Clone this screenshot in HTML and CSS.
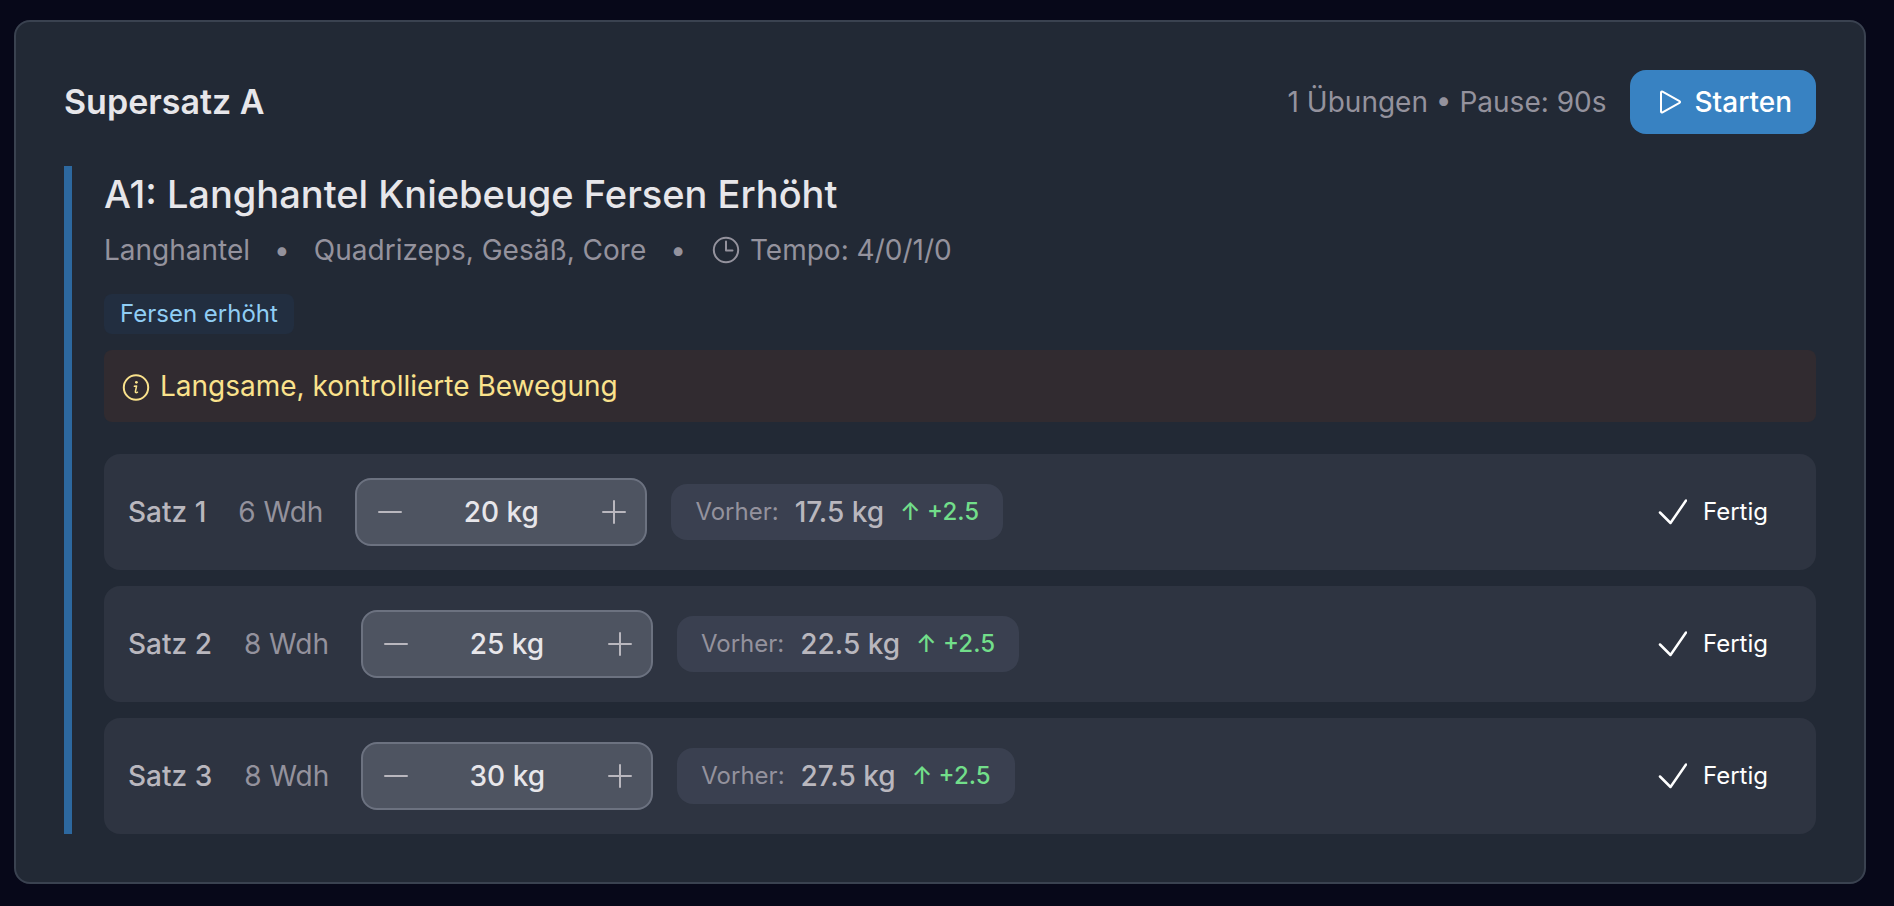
FILE: index.html
```html
<!DOCTYPE html>
<html lang="de">
<head>
<meta charset="utf-8">
<title>Supersatz A</title>
<link rel="stylesheet" href="styles.css">
</head>
<body>
<svg class="sprite" aria-hidden="true">
  <symbol id="play" viewBox="0 0 32 32"><path d="M7 6.500v19a1 1 0 0 0 1.500.9l17-9.500a1 1 0 0 0 0-1.800l-17-9.500A1 1 0 0 0 7 6.500Z"/></symbol>
  <symbol id="clock" viewBox="0 0 32 32"><circle cx="16" cy="16" r="12.200"/><path d="M16 7.500V16.500H22.500"/></symbol>
  <symbol id="info" viewBox="0 0 32 32"><circle cx="16" cy="17.500" r="12.200"/><path class="stem" d="M14.400 16.300L16.600 15.900L15.400 21.500C15.200 22.700 16.200 23.100 17.500 22.200"/><circle class="dot" cx="16.400" cy="12.300" r="1.400"/></symbol>
  <symbol id="minus" viewBox="0 0 32 32"><path d="M6 16h22"/></symbol>
  <symbol id="plus" viewBox="0 0 32 32"><path d="M6 16h22M17 5v22"/></symbol>
  <symbol id="check" viewBox="0 0 32 32"><path d="M5 16.500L15.500 27L31 4.500"/></symbol>
</svg>
<main class="card">
  <header class="card-header">
    <h2 class="card-title">Supersatz A</h2>
    <div class="card-actions">
      <span class="muted">1 Übungen • Pause: 90s</span>
      <button class="start" type="button"><svg class="icon"><use href="#play"/></svg>Starten</button>
    </div>
  </header>
  <section class="exercise">
    <h3 class="exercise-title">A1: Langhantel Kniebeuge Fersen Erhöht</h3>
    <div class="meta muted">
      <span>Langhantel</span><span>•</span><span>Quadrizeps, Gesäß, Core</span><span>•</span>
      <span class="tempo"><svg class="icon"><use href="#clock"/></svg>Tempo: 4/0/1/0</span>
    </div>
    <div class="tags"><span class="tag">Fersen erhöht</span></div>
    <p class="note"><svg class="icon"><use href="#info"/></svg>Langsame, kontrollierte Bewegung</p>
    <ul class="sets">
      <li class="set">
        <span class="set-name">Satz 1</span>
        <span class="reps">6 Wdh</span>
        <div class="stepper">
          <button type="button" aria-label="Weniger"><svg class="icon"><use href="#minus"/></svg></button>
          <output>20 kg</output>
          <button type="button" aria-label="Mehr"><svg class="icon"><use href="#plus"/></svg></button>
        </div>
        <div class="previous"><span class="label">Vorher:</span><span class="weight">17.5 kg</span><span class="delta">↑ +2.5</span></div>
        <button class="done" type="button"><svg class="icon check"><use href="#check"/></svg>Fertig</button>
      </li>
      <li class="set">
        <span class="set-name">Satz 2</span>
        <span class="reps">8 Wdh</span>
        <div class="stepper">
          <button type="button" aria-label="Weniger"><svg class="icon"><use href="#minus"/></svg></button>
          <output>25 kg</output>
          <button type="button" aria-label="Mehr"><svg class="icon"><use href="#plus"/></svg></button>
        </div>
        <div class="previous"><span class="label">Vorher:</span><span class="weight">22.5 kg</span><span class="delta">↑ +2.5</span></div>
        <button class="done" type="button"><svg class="icon check"><use href="#check"/></svg>Fertig</button>
      </li>
      <li class="set">
        <span class="set-name">Satz 3</span>
        <span class="reps">8 Wdh</span>
        <div class="stepper">
          <button type="button" aria-label="Weniger"><svg class="icon"><use href="#minus"/></svg></button>
          <output>30 kg</output>
          <button type="button" aria-label="Mehr"><svg class="icon"><use href="#plus"/></svg></button>
        </div>
        <div class="previous"><span class="label">Vorher:</span><span class="weight">27.5 kg</span><span class="delta">↑ +2.5</span></div>
        <button class="done" type="button"><svg class="icon check"><use href="#check"/></svg>Fertig</button>
      </li>
    </ul>
  </section>
</main>
</body>
</html>
```
FILE: styles.css
```css
* { box-sizing: border-box; }
body {
  margin: 0;
  padding: 20px 28px 22px 14px;
  background: #070819;
  color: #e7e6ea;
  font: 400 28px/40px Inter, "Liberation Sans", sans-serif;
}
h2, h3, p, ul { margin: 0; padding: 0; }
button { border: 0; background: none; color: inherit; font: inherit; cursor: pointer; }
.sprite { position: absolute; width: 0; height: 0; }
svg { fill: none; stroke: currentColor; stroke-width: 2; stroke-linecap: round; stroke-linejoin: round; flex: none; }
.stem { stroke-width: 1.5; }
.dot { fill: currentColor; stroke: none; }
.icon { width: 32px; height: 32px; }
.check { stroke-width: 2.5; overflow: visible; }
.card { padding: 48px; border: 2px solid #3a4250; border-radius: 16px; background: #222935; }
.card-header { display: flex; align-items: center; justify-content: space-between; margin-bottom: 32px; }
.card-title { font-size: 34px; font-weight: 600; line-height: 56px; }
.card-actions { display: flex; align-items: center; gap: 24px; }
.muted { color: #94929d; }
.start { display: flex; align-items: center; gap: 8px; height: 64px; padding: 0 24px; border-radius: 16px; background: #3882c2; color: #fff; font-weight: 500; }
.exercise { padding-left: 32px; border-left: 8px solid #2d689f; }
.exercise-title { font-size: 38px; font-weight: 500; line-height: 56px; margin-bottom: 8px; }
.meta { display: flex; gap: 24px; margin-bottom: 24px; }
.tempo { display: flex; align-items: center; gap: 8px; }
.tags { display: flex; margin-bottom: 16px; }
.tag { padding: 4px 16px; border-radius: 8px; background: #222e40; color: #90cdf4; font-size: 24px; line-height: 32px; }
.note { display: flex; align-items: center; gap: 8px; padding: 16px; margin-bottom: 32px; border-radius: 8px; background: #312b30; color: #fae28c; }
.sets { display: flex; flex-direction: column; gap: 16px; list-style: none; }
.set { display: flex; align-items: center; padding: 24px; border-radius: 16px; background: #2e3441; }
.set-name { margin-right: 32px; color: #b9b7be; font-weight: 500; }
.reps { margin-right: 32px; color: #94929d; }
.stepper { display: flex; align-items: center; justify-content: space-between; width: 292px; height: 68px; margin-right: 24px; border: 2px solid #6c7280; border-radius: 16px; background: #4e5461; font-weight: 500; }
.stepper button { display: flex; align-items: center; justify-content: center; width: 64px; height: 64px; padding: 0; color: #b9b7be; }
.previous { display: flex; align-items: center; gap: 16px; padding: 8px 24px; border-radius: 16px; background: #3a4050; }
.label { color: #94929d; font-size: 24px; }
.weight { color: #b9b7be; font-weight: 500; }
.delta { color: #72de8a; font-size: 24px; font-weight: 500; }
.done { display: flex; align-items: center; gap: 16px; margin-left: auto; padding: 0 24px; color: #fff; font-size: 24px; }
```
